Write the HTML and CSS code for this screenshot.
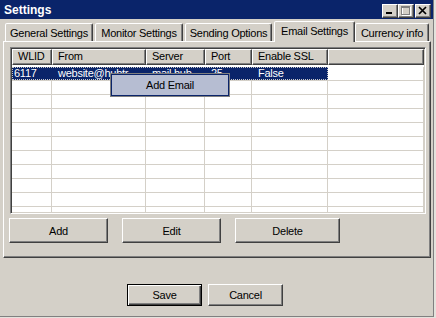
FILE: index.html
```html
<!DOCTYPE html>
<html lang="en">
<head>
<meta charset="utf-8">
<title>Settings</title>
<link rel="stylesheet" href="styles.css">
</head>
<body>

<div class="window">

  <!-- title bar -->
  <div class="titlebar">
    <span class="title">Settings</span>
    <div class="caption-btns">
      <div class="cap-btn">
        <svg width="14" height="12" viewBox="0 0 14 12"><rect x="3" y="7" width="6" height="2" fill="#000"/></svg>
      </div>
      <div class="cap-btn">
        <svg width="14" height="12" viewBox="0 0 14 12">
          <rect x="3.5" y="2.5" width="8" height="8" fill="none" stroke="#fff"/>
          <rect x="2.5" y="1.5" width="8" height="8" fill="none" stroke="#808080"/>
          <rect x="2" y="2" width="9" height="1" fill="#808080"/>
        </svg>
      </div>
      <div class="cap-btn close">
        <svg width="14" height="12" viewBox="0 0 14 12"><path d="M3 2 L10 9 M10 2 L3 9" stroke="#000" stroke-width="1.7" fill="none"/></svg>
      </div>
    </div>
  </div>

  <!-- tabs -->
  <div class="tabs">
    <div class="tab tab-general">General Settings</div>
    <div class="tab tab-monitor">Monitor Settings</div>
    <div class="tab tab-sending">Sending Options</div>
    <div class="tab tab-email sel">Email Settings</div>
    <div class="tab tab-currency">Currency info</div>
  </div>

  <div class="panel">
    <div class="listview">
      <div class="lv-head">
        <div class="lv-hcell c-id">WLID</div>
        <div class="lv-hcell c-from">From</div>
        <div class="lv-hcell c-server">Server</div>
        <div class="lv-hcell c-port">Port</div>
        <div class="lv-hcell c-ssl">Enable SSL</div>
        <div class="lv-hcell c-fill"></div>
      </div>
      <div class="lv-body">
        <div class="lv-row">
          <div class="lv-focus">
            <div class="lv-cell c-id">6117</div>
            <div class="lv-cell c-from">website@hubtravel.com</div>
            <div class="lv-cell c-server">mail.hubtravel.com</div>
            <div class="lv-cell c-port">25</div>
            <div class="lv-cell c-ssl">False</div>
          </div>
          <div class="lv-cell c-fill"></div>
        </div>
        <div class="lv-row"><div class="lv-cell c-id"></div><div class="lv-cell c-from"></div><div class="lv-cell c-server"></div><div class="lv-cell c-port"></div><div class="lv-cell c-ssl"></div><div class="lv-cell c-fill"></div></div>
        <div class="lv-row"><div class="lv-cell c-id"></div><div class="lv-cell c-from"></div><div class="lv-cell c-server"></div><div class="lv-cell c-port"></div><div class="lv-cell c-ssl"></div><div class="lv-cell c-fill"></div></div>
        <div class="lv-row"><div class="lv-cell c-id"></div><div class="lv-cell c-from"></div><div class="lv-cell c-server"></div><div class="lv-cell c-port"></div><div class="lv-cell c-ssl"></div><div class="lv-cell c-fill"></div></div>
        <div class="lv-row"><div class="lv-cell c-id"></div><div class="lv-cell c-from"></div><div class="lv-cell c-server"></div><div class="lv-cell c-port"></div><div class="lv-cell c-ssl"></div><div class="lv-cell c-fill"></div></div>
        <div class="lv-row"><div class="lv-cell c-id"></div><div class="lv-cell c-from"></div><div class="lv-cell c-server"></div><div class="lv-cell c-port"></div><div class="lv-cell c-ssl"></div><div class="lv-cell c-fill"></div></div>
        <div class="lv-row"><div class="lv-cell c-id"></div><div class="lv-cell c-from"></div><div class="lv-cell c-server"></div><div class="lv-cell c-port"></div><div class="lv-cell c-ssl"></div><div class="lv-cell c-fill"></div></div>
        <div class="lv-row"><div class="lv-cell c-id"></div><div class="lv-cell c-from"></div><div class="lv-cell c-server"></div><div class="lv-cell c-port"></div><div class="lv-cell c-ssl"></div><div class="lv-cell c-fill"></div></div>
        <div class="lv-row"><div class="lv-cell c-id"></div><div class="lv-cell c-from"></div><div class="lv-cell c-server"></div><div class="lv-cell c-port"></div><div class="lv-cell c-ssl"></div><div class="lv-cell c-fill"></div></div>
        <div class="lv-row"><div class="lv-cell c-id"></div><div class="lv-cell c-from"></div><div class="lv-cell c-server"></div><div class="lv-cell c-port"></div><div class="lv-cell c-ssl"></div><div class="lv-cell c-fill"></div></div>
        <div class="lv-row"><div class="lv-cell c-id"></div><div class="lv-cell c-from"></div><div class="lv-cell c-server"></div><div class="lv-cell c-port"></div><div class="lv-cell c-ssl"></div><div class="lv-cell c-fill"></div></div>
      </div>
    </div>

    <div class="panel-btns">
      <button class="btn btn-add">Add</button>
      <button class="btn btn-edit">Edit</button>
      <button class="btn btn-delete">Delete</button>
    </div>
  </div>

  <div class="dialog-btns">
    <button class="btn btn-dlg default">Save</button>
    <button class="btn btn-dlg">Cancel</button>
  </div>

  <!-- context menu over the list -->
  <div class="ctx"><div class="ctx-item">Add Email</div></div>
</div>

</body>
</html>
```

FILE: styles.css
```css
/* --- base --- */
*{box-sizing:border-box;margin:0;padding:0}
body{
  background:#e4e2dc;
  font:11px 'Liberation Sans',Arial,sans-serif;
  letter-spacing:-.25px;
  color:#000;
}

/* --- window --- */
.window{
  position:relative;
  width:434px;
  height:317px;
  background:#d4d0c8;
  border-right:1px solid #808080;
  border-bottom:1px solid #808080;
  display:flex;
  flex-direction:column;
}
.titlebar{
  height:19px;
  flex:none;
  background:#0a246a;
  display:flex;
  justify-content:space-between;
  align-items:center;
  padding:0 2px 0 4px;
}
.title{color:#fff;font-weight:bold;font-size:12px;letter-spacing:0}
.caption-btns{display:flex;align-self:flex-start;margin-top:4px}
.cap-btn{
  width:16px;height:14px;
  background:#d4d0c8;
  border:1px solid;
  border-color:#fff #404040 #404040 #fff;
  box-shadow:inset -1px -1px #808080;
}
.cap-btn svg{display:block}
.cap-btn.close{margin-left:1px}

/* --- tabs --- */
.tabs{
  display:flex;
  align-items:flex-start;
  height:23px;
  flex:none;
  margin:0 0 -1px 5px;
}
.tab{
  height:18px;
  margin-top:4px;
  margin-right:2px;
  background:#d4d0c8;
  border:1px solid;
  border-bottom:0;
  border-color:#fff #404040 transparent #fff;
  box-shadow:inset -1px 0 #808080;
  border-radius:2px 2px 0 0;
  display:flex;
  align-items:center;
  justify-content:center;
  white-space:nowrap;
}
.tab.sel{
  position:relative;
  z-index:1;
  height:21px;
  margin-top:2px;
  padding-bottom:3px;
}
.tab-general{width:88px}
.tab-monitor{width:88px}
.tab-sending{width:87px}
.tab-email{width:81px;margin-right:0}
.tab-currency{width:74px}

/* --- tab page --- */
.panel{
  width:428px;
  height:217px;
  flex:none;
  margin-left:3px;
  border:1px solid;
  border-color:#fff #404040 #404040 #fff;
  box-shadow:inset -1px -1px #808080;
  padding:5px 4px 0 5px;
}

/* --- list view --- */
.listview{
  width:416px;
  height:167px;
  margin-left:1px;
  background:#fff;
  border:1px solid;
  border-color:#808080 #fff #fff #808080;
  box-shadow:inset 1px 1px #404040,inset -1px -1px #d4d0c8;
  padding:1px;
  overflow:hidden;
}
.lv-head{display:flex;height:16px}
.lv-hcell{
  height:16px;
  background:#d4d0c8;
  border:1px solid;
  border-color:#fff #404040 #404040 #fff;
  box-shadow:inset -1px -1px #808080;
  padding-left:5px;
  line-height:13px;
  white-space:nowrap;
}
.lv-body{padding-top:2px}
.lv-row{display:flex;height:14px;border-bottom:1px solid #d4d0c8}
.lv-cell{
  height:13px;
  line-height:13px;
  padding-left:6px;
  border-right:1px solid #d4d0c8;
  white-space:nowrap;
  overflow:hidden;
  text-overflow:ellipsis;
}
.lv-cell.c-id{padding-left:2px}
.c-id{width:40px;flex:none}
.c-from{width:94px;flex:none}
.c-server{width:59px;flex:none}
.c-port{width:47px;flex:none}
.c-ssl{width:76px;flex:none}
.c-fill{flex:1}
.lv-focus{
  display:flex;
  background:#0a246a;
  color:#fff;
  outline:1px dotted #c8c8c8;
  outline-offset:-1px;
}
.lv-focus .lv-cell{border-right-color:#0a246a}

/* --- buttons --- */
.btn{
  font:inherit;
  letter-spacing:inherit;
  color:#000;
  background:#d4d0c8;
  border:1px solid;
  border-color:#fff #404040 #404040 #fff;
  box-shadow:inset -1px -1px #808080;
  height:25px;
}
.panel-btns{display:flex;gap:14px;margin-top:4px}
.btn-add,.btn-edit{width:99px}
.btn-delete{width:105px}

.dialog-btns{display:flex;gap:6px;margin:26px 0 0 127px}
.btn-dlg{width:75px;height:22px}
.btn.default{
  border-color:#000;
  box-shadow:inset 1px 1px #fff,inset -1px -1px #404040,inset -2px -2px #808080;
}

/* --- context menu --- */
.ctx{
  position:absolute;
  left:110px;
  top:73px;
  width:120px;
  height:24px;
  border:1px solid #808080;
  background:#0a246a;
  padding:1px;
}
.ctx-item{
  height:100%;
  background:#b6bdd2;
  display:flex;
  align-items:center;
  justify-content:center;
}
```
